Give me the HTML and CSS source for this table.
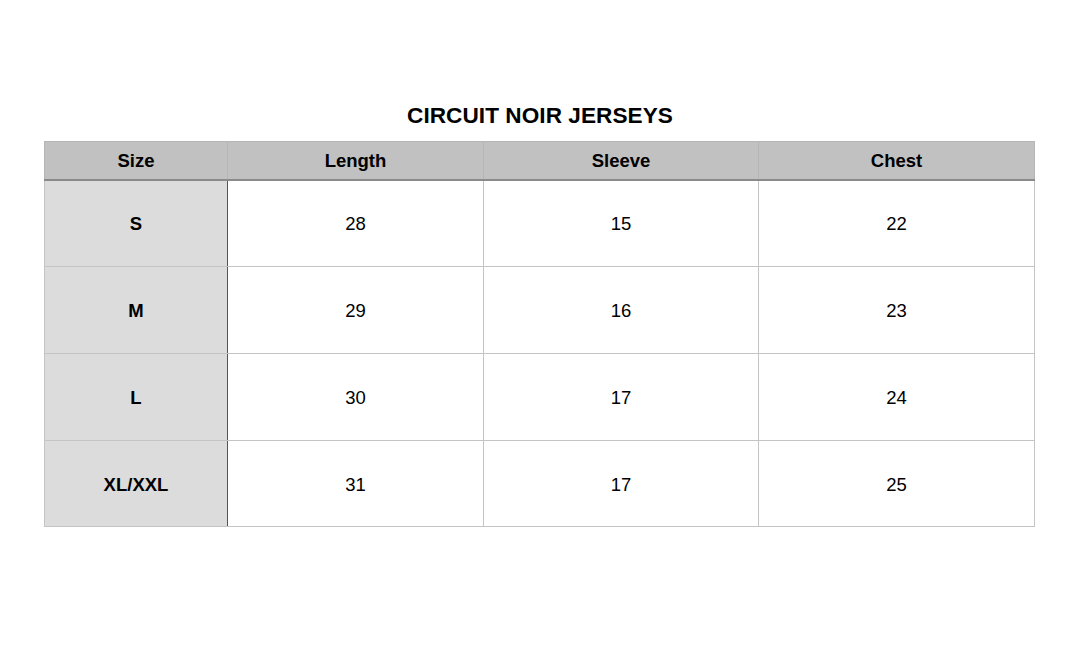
FILE: index.html
```html
<!DOCTYPE html>
<html>
<head>
<meta charset="utf-8">
<link rel="stylesheet" href="styles.css">
</head>
<body>
<div class="page">
  <h1 class="title">CIRCUIT NOIR JERSEYS</h1>
  <table class="chart">
    <colgroup>
      <col class="c1"><col class="c2"><col class="c3"><col class="c4">
    </colgroup>
    <thead>
      <tr><th class="size-h">Size</th><th>Length</th><th>Sleeve</th><th>Chest</th></tr>
    </thead>
    <tbody>
      <tr><th class="size">S</th><td>28</td><td>15</td><td>22</td></tr>
      <tr><th class="size">M</th><td>29</td><td>16</td><td>23</td></tr>
      <tr><th class="size">L</th><td>30</td><td>17</td><td>24</td></tr>
      <tr class="last"><th class="size">XL/XXL</th><td>31</td><td>17</td><td>25</td></tr>
    </tbody>
  </table>
</div>
</body>
</html>
```
FILE: styles.css
```css
html, body { margin: 0; padding: 0; background: #fff; }
body { font-family: "Liberation Sans", Arial, sans-serif; color: #000; }
.page { padding: 102px 46px 0 44px; }
.title {
  margin: 0 0 11px 0;
  text-align: center;
  font-size: 22.6px;
  font-weight: bold;
  line-height: 28px;
  padding-left: 2px;
  letter-spacing: 0.05px;
}
.chart {
  width: 990px;
  border-collapse: collapse;
  table-layout: fixed;
}
.c1 { width: 183px; }
.c2 { width: 256px; }
.c3 { width: 275px; }
.c4 { width: 276px; }
.chart thead th {
  background: #c0c1c0;
  height: 36px;
  font-size: 18.5px;
  font-weight: bold;
  border: 1px solid #b4b5b4;
  border-bottom: 2px solid #8a8a8a;
  padding: 2px 0 0 0;
  box-sizing: border-box;
  height: 38px;
}
.chart td, .chart tbody th {
  height: 86px;
  border: 1px solid #c4c4c4;
  text-align: center;
  font-size: 18.5px;
  padding: 2px 0 0 0;
  box-sizing: border-box;
  height: 87px;
}
.chart tr.last td, .chart tr.last th { height: 86px; }
.chart tbody th.size {
  background: #dcdcdc;
  font-weight: bold;
  border-right: 1px solid #555;
}
```
